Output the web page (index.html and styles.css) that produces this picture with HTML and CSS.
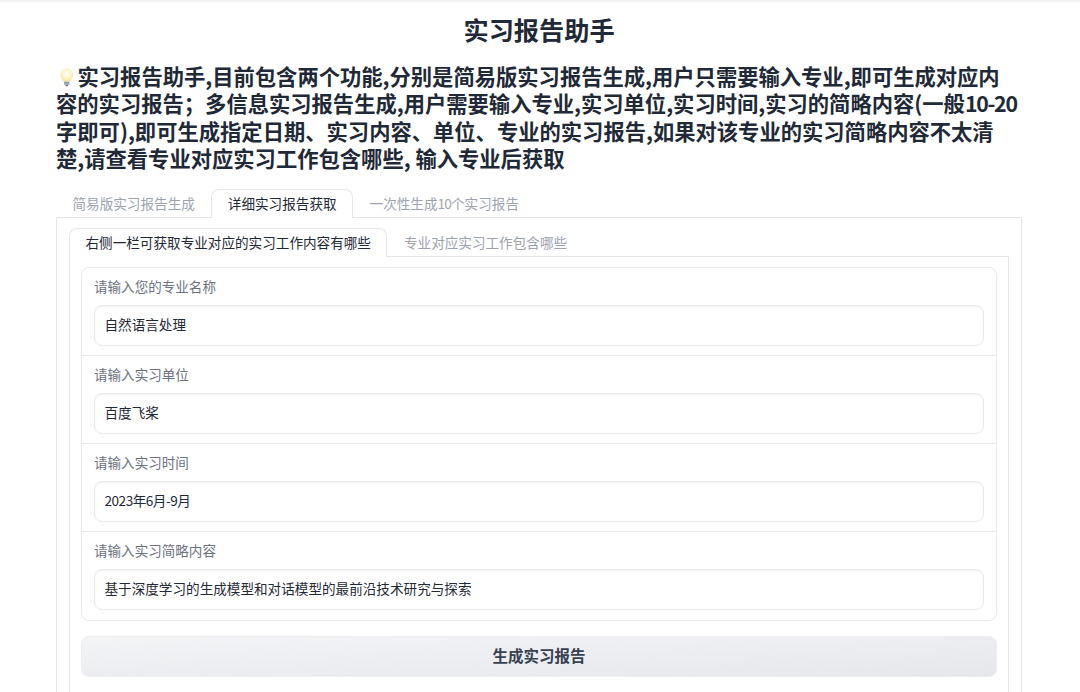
FILE: index.html
```html
<!DOCTYPE html>
<html lang="zh-CN">
<head>
  <meta charset="UTF-8">
  <meta name="viewport" content="width=device-width, initial-scale=1.0">
  <title>实习报告助手</title>
  <link rel="stylesheet" href="styles.css">
</head>

<body>
  <div class="top-shade"></div>
  <div class="app">
    <h1 class="page-title">实习报告助手</h1>

    <!-- Intro -->
    <h3 class="intro">
      <svg class="bulb" viewBox="0 0 22 24">
        <defs>
          <radialGradient id="glass" cx="50%" cy="40%" r="60%">
            <stop offset="0%" stop-color="#fffef6"></stop>
            <stop offset="65%" stop-color="#fef3c4"></stop>
            <stop offset="100%" stop-color="#fbe08e"></stop>
          </radialGradient>
        </defs>
        <path d="M11 2.500a7 7 0 0 0-7 7c0 2.800 1.700 4 2.700 5.800.4.800.6 1.300.8 1.700h7c.2-.4.4-.9.800-1.700 1-1.800 2.700-3 2.700-5.800a7 7 0 0 0-7-7z" fill="url(#glass)"></path>
        <rect x="8" y="17" width="6" height="3.500" rx="1" fill="#9aa3ad"></rect>
        <rect x="9.500" y="20.500" width="3" height="1.500" rx=".7" fill="#66717d"></rect>
      </svg>实习报告助手,目前包含两个功能,分别是简易版实习报告生成,用户只需要输入专业,即可生成对应内容的实习报告；多信息实习报告生成,用户需要输入专业,实习单位,实习时间,实习的简略内容(一般<span class="num">10-20</span>字即可),即可生成指定日期、实习内容、单位、专业的实习报告,如果对该专业的实习简略内容不太清楚,请查看专业对应实习工作包含哪些, 输入专业后获取
    </h3>

    <!-- Outer tabs -->
    <div class="tab-nav">
      <button class="tab">简易版实习报告生成</button>
      <button class="tab selected">详细实习报告获取</button>
      <button class="tab">一次性生成<span class="num">10</span>个实习报告</button>
    </div>

    <div class="tab-panel outer-panel">
      <!-- Inner tabs -->
      <div class="tab-nav inner-nav">
        <button class="tab selected">右侧一栏可获取专业对应的实习工作内容有哪些</button>
        <button class="tab">专业对应实习工作包含哪些</button>
      </div>

      <div class="tab-panel inner-panel">
        <div class="form">
          <label class="field">
            <span class="field-label">请输入您的专业名称</span>
            <input class="field-input" type="text" value="自然语言处理">
          </label>
          <label class="field">
            <span class="field-label">请输入实习单位</span>
            <input class="field-input" type="text" value="百度飞桨">
          </label>
          <label class="field">
            <span class="field-label">请输入实习时间</span>
            <input class="field-input date-input" type="text" value="2023年6月-9月">
          </label>
          <label class="field">
            <span class="field-label">请输入实习简略内容</span>
            <input class="field-input" type="text" value="基于深度学习的生成模型和对话模型的最前沿技术研究与探索">
          </label>
        </div>

        <button class="submit-button">生成实习报告</button>
      </div>
    </div>
  </div>
</body>
</html>
```

FILE: styles.css
```css
* {
  margin: 0;
  padding: 0;
  box-sizing: border-box;
}

html,
body {
  height: 692px;
  overflow: hidden;
}

body {
  background: #fff;
  color: #1f2937;
  font-family: "Noto Sans CJK SC", "Noto Sans", sans-serif;
}

.top-shade {
  height: 3px;
  background: linear-gradient(180deg, #f0f0f1, #fff);
}

.app {
  display: flex;
  flex-direction: column;
  padding: 0 58px 0 56px;
}

.page-title {
  height: 54px;
  padding-top: 6px;
  font-size: 25.200px;
  line-height: 40px;
  font-weight: 700;
  text-align: center;
}

.intro {
  height: 132px;
  padding: 5px 3px 0 0;
  font-size: 21.300px;
  line-height: 27.300px;
  font-weight: 700;
}

.num {
  letter-spacing: -0.06em;
}

.bulb {
  display: inline-block;
  width: 21.500px;
  height: 22px;
  vertical-align: -3px;
}

.tab-nav {
  display: flex;
}

.tab {
  height: 29px;
  margin-bottom: -1px;
  padding: 0 15.500px 2px;
  border: 1px solid transparent;
  border-bottom: none;
  border-radius: 8px 8px 0 0;
  background: none;
  color: #9ca3af;
  font: inherit;
  font-size: 13.600px;
  line-height: 25px;
  white-space: nowrap;
}

.tab.selected {
  position: relative;
  border-color: #e5e7eb;
  background: #fff;
  color: #1f2937;
}

.tab-panel {
  border: 1px solid #e5e7eb;
  border-bottom: none;
}

.outer-panel {
  height: 476px;
  padding: 10px 12px 0;
}

.inner-panel {
  height: 436px;
  padding: 10px 11px 0;
}

.form {
  border: 1px solid #e9eaed;
  border-radius: 8px;
  overflow: hidden;
}

.field {
  display: block;
  height: 88px;
  padding: 8px 12px 0;
  border-bottom: 1px solid #e9eaed;
}

.field:last-child {
  border-bottom: none;
}

.field-label {
  display: block;
  height: 29px;
  color: #6b7280;
  font-size: 13.550px;
  line-height: 20px;
}

.field-input {
  display: block;
  width: 100%;
  height: 41px;
  padding: 0 10px 3px 9.500px;
  border: 1px solid #e9eaed;
  border-radius: 8px;
  background: #fff;
  box-shadow: inset 0 1px 2px rgba(0, 0, 0, 0.05);
  color: #1f2937;
  font: inherit;
  font-size: 13.600px;
  outline: none;
}

.date-input {
  letter-spacing: -0.5px;
}

.submit-button {
  display: block;
  width: 100%;
  height: 41px;
  margin-top: 15px;
  padding-bottom: 3px;
  border: 1px solid #eceef0;
  border-radius: 8px;
  background: linear-gradient(to bottom right, #f3f4f6, #e5e7eb);
  color: #374151;
  font: inherit;
  font-size: 15.500px;
  font-weight: 700;
}
```
